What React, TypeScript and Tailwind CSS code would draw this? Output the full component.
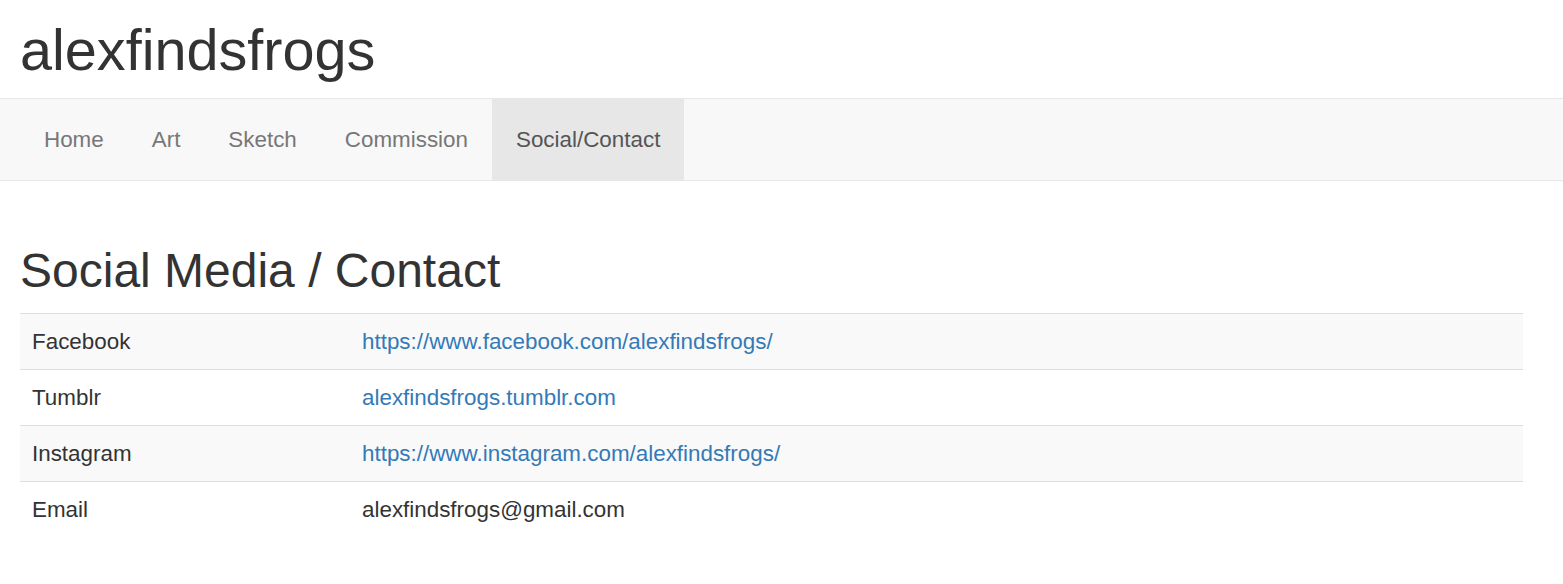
const navItems = ['Home', 'Art', 'Sketch', 'Commission', 'Social/Contact'];

const rows: { label: string; value: string; link: boolean }[] = [
    { label: 'Facebook', value: 'https://www.facebook.com/alexfindsfrogs/', link: true },
    { label: 'Tumblr', value: 'alexfindsfrogs.tumblr.com', link: true },
    { label: 'Instagram', value: 'https://www.instagram.com/alexfindsfrogs/', link: true },
    { label: 'Email', value: 'alexfindsfrogs@gmail.com', link: false },
];

export default function App() {
    return (
        <div className="min-h-[584px] bg-white font-['Liberation_Sans',Arial,sans-serif] text-[#333] text-[22.4px]">
            {/* Site title */}
            <div className="pl-[20px] pt-[18px] pb-[16px]">
                <h1 className="text-[57.6px] leading-[64px] font-normal">alexfindsfrogs</h1>
            </div>

            {/* Navbar */}
            <nav className="h-[83px] border-y border-[#e7e7e7] bg-[#f8f8f8] pl-[20px] flex">
                {navItems.map((item) => {
                    const active = item === 'Social/Contact';
                    return (
                        <a
                            key={item}
                            href="#"
                            className={
                                active
                                    ? 'flex items-center px-[24px] pt-[1px] bg-[#e7e7e7] text-[#555]'
                                    : 'flex items-center px-[24px] pt-[1px] text-[#777]'
                            }
                        >
                            {item}
                        </a>
                    );
                })}
            </nav>

            {/* Content */}
            <div className="pl-[20px] pt-[63px]">
                <h2 className="text-[48px] leading-[53px] font-normal mb-[16px]">Social Media / Contact</h2>
                <table className="w-[1503px] border-collapse">
                    <tbody>
                        {rows.map((row, i) => (
                            <tr key={row.label} className={i % 2 === 0 ? 'bg-[#f9f9f9]' : ''}>
                                <td className="w-[330px] border-t border-[#ddd] px-[12px] h-[56px] leading-[31px] align-middle">
                                    {row.label}
                                </td>
                                <td className="border-t border-[#ddd] px-[12px] h-[56px] leading-[31px] align-middle">
                                    {row.link ? (
                                        <a href="#" className="text-[#337ab7]">
                                            {row.value}
                                        </a>
                                    ) : (
                                        row.value
                                    )}
                                </td>
                            </tr>
                        ))}
                    </tbody>
                </table>
            </div>
        </div>
    );
}
